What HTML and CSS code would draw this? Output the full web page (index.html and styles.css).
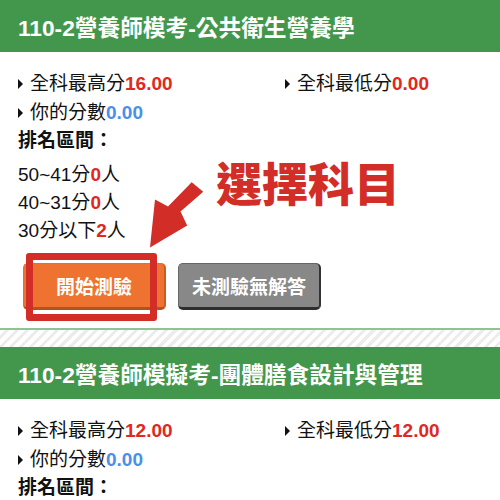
FILE: index.html
```html
<!DOCTYPE html>
<html lang="zh-Hant">
<head>
<meta charset="utf-8">
<title>模考成績</title>
<link rel="stylesheet" href="styles.css">
</head>
<body>
<div class="page">
  <section class="card">
    <h2 class="card-head">110-2營養師模考-公共衛生營養學</h2>
    <div class="card-body">
      <div class="stats">
        <div class="stat"><span class="tri"></span>全科最高分<b class="red">16.00</b></div>
        <div class="stat"><span class="tri"></span>全科最低分<b class="red">0.00</b></div>
        <div class="stat"><span class="tri"></span>你的分數<b class="blue">0.00</b></div>
      </div>
      <div class="rank-title">排名區間：</div>
      <ul class="ranks">
        <li>50~41分<b class="red">0</b>人</li>
        <li>40~31分<b class="red">0</b>人</li>
        <li>30分以下<b class="red">2</b>人</li>
      </ul>
      <div class="actions">
        <button class="btn btn-orange">開始測驗</button>
        <button class="btn btn-gray">未測驗無解答</button>
      </div>
    </div>
  </section>
  <div class="divider"></div>
  <section class="card">
    <h2 class="card-head">110-2營養師模擬考-團體膳食設計與管理</h2>
    <div class="card-body">
      <div class="stats">
        <div class="stat"><span class="tri"></span>全科最高分<b class="red">12.00</b></div>
        <div class="stat"><span class="tri"></span>全科最低分<b class="red">12.00</b></div>
        <div class="stat"><span class="tri"></span>你的分數<b class="blue">0.00</b></div>
      </div>
      <div class="rank-title">排名區間：</div>
    </div>
  </section>

  <div class="note-text">選擇科目</div>
  <svg class="note-arrow" viewBox="145 178 62 72" width="62" height="72">
    <polygon points="191.7,182.2 203.2,191.7 180.5,211.5 187.2,225.5 150,247.5 155,199.5 168,206.5" fill="#d22d26"/>
  </svg>
  <div class="note-box"></div>
</div>
</body>
</html>
```

FILE: styles.css
```css
html, body {
  margin: 0;
  padding: 0;
  background: #fff;
}

.page {
  position: relative;
  width: 500px;
  height: 500px;
  overflow: hidden;
  font-family: "Liberation Sans", "Noto Sans CJK TC", sans-serif;
  color: #111;
}

.card-head {
  margin: 0;
  height: 52px;
  padding-left: 18px;
  display: flex;
  align-items: center;
  background: #43974d;
  color: #fff;
  font-size: 22.7px;
  font-weight: bold;
  white-space: nowrap;
}

.card-body {
  padding: 17px 0 18px 18px;
}

.stats {
  display: grid;
  grid-template-columns: 267px auto;
  font-size: 19px;
  line-height: 29px;
}

.stat {
  display: flex;
  align-items: center;
  white-space: nowrap;
}

.tri {
  width: 0;
  height: 0;
  border-top: 5px solid transparent;
  border-bottom: 5px solid transparent;
  border-left: 5px solid #111;
  margin-right: 7px;
}

.red { color: #e2271d; }
.blue { color: #4a8fe9; }

.rank-title {
  font-size: 19px;
  font-weight: bold;
  line-height: 28px;
}

.ranks {
  list-style: none;
  margin: 6px 0 0;
  padding: 0;
  font-size: 19px;
  line-height: 28px;
}

.actions {
  display: flex;
  gap: 12px;
  margin-top: 18px;
  padding-left: 5px;
}

.btn {
  box-sizing: border-box;
  width: 143px;
  height: 47px;
  border-radius: 5px;
  color: #fff;
  font-family: "Liberation Sans", "Noto Sans CJK TC", sans-serif;
  font-size: 19px;
  font-weight: bold;
  padding: 0;
  cursor: pointer;
}

.btn-orange {
  background: #ee7330;
  border: 1px solid #e86e2c;
  border-bottom: 3px solid #b1541c;
  border-right: 2px solid #c85f22;
}

.btn-gray {
  background: #888;
  border: 1px solid #666;
  border-bottom: 3px solid #2e2e2e;
  border-right: 2px solid #333;
}

.divider {
  height: 17px;
  border-top: 2px solid #8ec393;
  background: repeating-linear-gradient(135deg, #fff 0 4px, #ececec 4px 7px);
}

.note-text {
  position: absolute;
  left: 216px;
  top: 158px;
  font-family: "Noto Sans CJK TC", sans-serif;
  font-weight: 900;
  font-size: 46px;
  line-height: 46px;
  color: #d22d26;
  letter-spacing: 0;
}

.note-arrow {
  position: absolute;
  left: 145px;
  top: 178px;
}

.note-box {
  position: absolute;
  left: 26px;
  top: 253px;
  width: 131px;
  height: 68px;
  box-sizing: border-box;
  border: 7px solid #d22d26;
  border-radius: 3px;
}
```
